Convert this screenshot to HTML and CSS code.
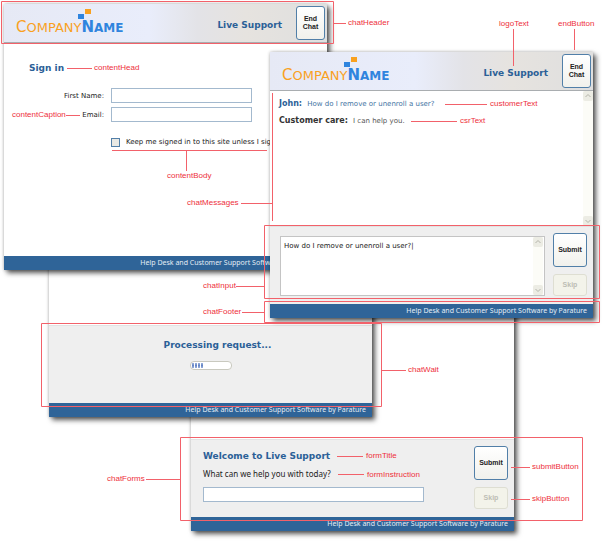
FILE: index.html
```html
<!DOCTYPE html>
<html lang="en">
<head>
<meta charset="utf-8">
<title>Live Support chat style guide</title>
<link rel="stylesheet" href="styles.css">
</head>
<body>
<main class="canvas">

  <section class="window window-forms">
    <div class="window-body"></div>
    <form class="panel forms">
      <div class="forms-main">
        <h2 class="title">Welcome to Live Support</h2>
        <label class="instruction" for="question">What can we help you with today?</label>
        <input class="field" id="question" type="text">
      </div>
      <div class="actions">
        <button class="button submit" type="button">Submit</button>
        <button class="button skip" type="button" disabled>Skip</button>
      </div>
    </form>
    <footer class="footer">Help Desk and Customer Support Software by Parature</footer>
  </section>

  <section class="window window-wait">
    <div class="window-body"></div>
    <div class="panel wait">
      <h2 class="title wait-title">Processing request...</h2>
      <div class="loader"><i></i><i></i><i></i><i></i></div>
    </div>
    <footer class="footer">Help Desk and Customer Support Software by Parature</footer>
  </section>

  <section class="window window-signin">
    <header class="header">
      <div class="logo">
        <svg class="logo-mark" viewBox="0 0 13 11" aria-hidden="true"><rect x="7" y="0" width="6" height="5" fill="#f9a11f"/><rect x="0" y="5" width="6" height="5" fill="#2f84de"/></svg>
        <div class="logo-name"><span class="company">Company</span><span class="name">Name</span></div>
      </div>
      <h1 class="title">Live Support</h1>
      <button class="button end" type="button">End Chat</button>
    </header>
    <form class="window-body signin">
      <h2 class="title">Sign in</h2>
      <div class="signin-fields">
        <label for="first">First Name:</label>
        <input class="field" id="first" type="text">
        <label for="email">Email:</label>
        <input class="field" id="email" type="text">
      </div>
      <label class="keep"><input type="checkbox">Keep me signed in to this site unless I sign out</label>
    </form>
    <footer class="footer">Help Desk and Customer Support Software by Parature</footer>
  </section>

  <section class="window window-chat">
    <header class="header">
      <div class="logo">
        <svg class="logo-mark" viewBox="0 0 13 11" aria-hidden="true"><rect x="7" y="0" width="6" height="5" fill="#f9a11f"/><rect x="0" y="5" width="6" height="5" fill="#2f84de"/></svg>
        <div class="logo-name"><span class="company">Company</span><span class="name">Name</span></div>
      </div>
      <h1 class="title">Live Support</h1>
      <button class="button end" type="button">End Chat</button>
    </header>
    <div class="window-body messages">
      <div class="message-list">
        <p class="customer"><b>John:</b> How do I remove or unenroll a user?</p>
        <p class="csr"><b>Customer care:</b> I can help you.</p>
      </div>
      <div class="scrollbar">
        <svg viewBox="0 0 10 10" aria-hidden="true"><path d="M2.5 6 5 3.5 7.5 6"/></svg>
        <svg viewBox="0 0 10 10" aria-hidden="true"><path d="M2.5 4 5 6.5 7.5 4"/></svg>
      </div>
    </div>
    <form class="panel entry">
      <div class="entry-box">
        <textarea aria-label="Message">How do I remove or unenroll a user?|</textarea>
        <div class="scrollbar">
          <svg viewBox="0 0 10 10" aria-hidden="true"><path d="M2.5 6 5 3.5 7.5 6"/></svg>
          <svg viewBox="0 0 10 10" aria-hidden="true"><path d="M2.5 4 5 6.5 7.5 4"/></svg>
        </div>
      </div>
      <div class="actions">
        <button class="button submit" type="button">Submit</button>
        <button class="button skip" type="button" disabled>Skip</button>
      </div>
    </form>
    <footer class="footer">Help Desk and Customer Support Software by Parature</footer>
  </section>

  <svg class="callouts" viewBox="0 0 602 543" aria-hidden="true">
    <path d="M1.500 1.500H333.500V43.500H1.500ZM333.500 23.500H346"/>
    <path d="M67 68.500H92M66 115.500H80"/>
    <path d="M112 150.500H267M186.500 150.500V171"/>
    <path d="M272.500 93V221M241 203.500H272.500"/>
    <path d="M513.500 29V66M574.500 29V50"/>
    <path d="M445 104.500H487M411 121.500H457"/>
    <path d="M264.500 225.500H599.500V298.500H264.500ZM236 286.500H264.500"/>
    <path d="M264.500 301.500H599.500V322.500H264.500ZM242 312.500H264.500"/>
    <path d="M41.500 323.500H381.500V406.500H41.500ZM381.500 370.500H406"/>
    <path d="M180.500 437.500H582.500V520.500H180.500ZM146 479.500H180.500"/>
    <path d="M337 456.500H363M338 474.500H364"/>
    <path d="M511 467.500H530M511 499.500H530"/>
  </svg>

  <span class="tag tag-header">chatHeader</span>
  <span class="tag tag-logo">logoText</span>
  <span class="tag tag-end">endButton</span>
  <span class="tag tag-head">contentHead</span>
  <span class="tag tag-caption">contentCaption</span>
  <span class="tag tag-body">contentBody</span>
  <span class="tag tag-messages">chatMessages</span>
  <span class="tag tag-customer">customerText</span>
  <span class="tag tag-csr">csrText</span>
  <span class="tag tag-input">chatInput</span>
  <span class="tag tag-footer">chatFooter</span>
  <span class="tag tag-wait">chatWait</span>
  <span class="tag tag-forms">chatForms</span>
  <span class="tag tag-title">formTitle</span>
  <span class="tag tag-instruction">formInstruction</span>
  <span class="tag tag-submit">submitButton</span>
  <span class="tag tag-skip">skipButton</span>
</main>
</body>
</html>
```
FILE: styles.css
```css
* { box-sizing: border-box; }

body {
  margin: 0;
  background: #fff;
  color: #222;
  font: 7px/10px "DejaVu Sans", Verdana, sans-serif;
}

h1, h2, p { margin: 0; }

input, button, textarea { font: inherit; color: inherit; margin: 0; }

/* Free canvas holding the overlapping windows and their callouts */
.canvas {
  position: relative;
  min-height: 543px;
  overflow: hidden;
}

.window {
  position: absolute;
  display: flex;
  flex-direction: column;
  width: 323px;
  height: 266px;
  background: #fff;
  box-shadow: 3px 3px 5px rgba(0, 0, 0, .65), 0 0 3px rgba(0, 0, 0, .25);
}

.window-signin { left: 4px; top: 4px; }
.window-chat { left: 270px; top: 52px; }
.window-wait { left: 49px; top: 151px; }
.window-forms { left: 191px; top: 265px; }

.window-body { flex: 1; }

.title {
  color: #2b6097;
  font-size: 9px;
  line-height: 12px;
  font-weight: bold;
}

.header {
  display: flex;
  align-items: flex-start;
  gap: 14px;
  height: 39px;
  padding: 2px 2px 0 12px;
  border-bottom: 1px solid #a9adb0;
  background: linear-gradient(90deg, #e6e9f5, #e9edfb 45%, #e3e3e7 60%, #e6e3df 75%, #dfdfdf);
}

.header .title { margin-top: 13px; }

.logo { flex: 1; padding-top: 3px; }

.logo-mark {
  display: block;
  width: 13px;
  height: 11px;
  margin-left: 62px;
}

.logo-name {
  display: flex;
  align-items: baseline;
  height: 14px;
  line-height: 14px;
  text-transform: uppercase;
}

.company { color: #f9a11f; font-size: 13px; }
.company::first-letter { font-size: 15px; }
.name { color: #2f84de; font-size: 12px; font-weight: bold; }
.name::first-letter { font-size: 15px; }

.button {
  border: 1px solid #517fa8;
  border-radius: 3px;
  padding: 0;
  background: linear-gradient(#fff, #f1f1ec);
  font-family: "Liberation Sans", Arial, sans-serif;
  font-size: 7px;
  line-height: 8px;
  font-weight: bold;
  text-align: center;
}

.end {
  width: 29px;
  height: 34px;
  padding: 0 3px;
}

.field {
  width: 100%;
  height: 15px;
  border: 1px solid #a3b9ce;
  padding: 0 3px;
  background: #fff;
}

.signin { padding: 19px 0 0 25px; }

.signin-fields {
  display: grid;
  grid-template-columns: 75px 141px;
  gap: 4px 7px;
  margin-top: 14px;
  align-items: center;
}

.signin-fields label { text-align: right; }

.keep {
  display: flex;
  align-items: center;
  gap: 6px;
  margin: 15px 0 0 82px;
  white-space: nowrap;
}

.keep input {
  appearance: none;
  width: 9px;
  height: 9px;
  border: 1px solid #527fa8;
  background: #e9e9e4;
}

.messages { display: flex; }

.message-list {
  flex: 1;
  padding: 8px 9px;
}

.message-list p { margin-bottom: 7px; }
.message-list b { font-size: 8px; margin-right: 3px; }
.customer { color: #4474a3; }
.customer b { color: #2b6097; }
.csr { color: #555; }
.csr b { color: #333; }

.scrollbar {
  display: flex;
  flex-direction: column;
  justify-content: space-between;
  width: 10px;
  background: #fcfcf7;
}

.scrollbar svg {
  width: 10px;
  height: 10px;
  border-radius: 2px;
  background: #ecece4;
  fill: none;
  stroke: #b4b4aa;
}

.panel {
  height: 78px;
  border-top: 1px solid #e2e2e2;
  background: #efefef;
}

.actions {
  display: flex;
  flex-direction: column;
  gap: 7px;
}

.submit { width: 34px; height: 34px; }

.skip {
  width: 34px;
  height: 22px;
  border-color: #deded2;
  background: #f3f3ea;
  color: #bdbdb4;
}

.entry {
  display: flex;
  gap: 8px;
  padding: 6px 6px 8px 10px;
}

.entry-box {
  display: flex;
  flex: 1;
  margin-top: 3px;
  height: 60px;
  border: 1px solid #c4c4c4;
  padding-right: 1px;
  background: #fff;
}

.entry-box textarea {
  flex: 1;
  min-width: 0;
  border: 0;
  padding: 4px 3px;
  resize: none;
  overflow: hidden;
  background: none;
}

.wait {
  display: flex;
  flex-direction: column;
  align-items: center;
  gap: 10px;
  padding-top: 13px;
}

.wait-title { padding-left: 14px; }

.loader {
  display: flex;
  gap: 1px;
  width: 42px;
  height: 9px;
  border: 1px solid #c9c9bf;
  border-radius: 4px;
  padding: 1px;
  background: #fff;
}

.loader i {
  width: 2px;
  background: linear-gradient(#9db3dc, #6585c6, #9db3dc);
}

.forms {
  display: flex;
  justify-content: space-between;
  padding: 6px 6px 0 12px;
}

.forms-main {
  display: flex;
  flex-direction: column;
  width: 221px;
  padding-top: 4px;
}

.instruction {
  margin: 7px 0 8px;
  font-family: "Noto Sans", Verdana, sans-serif;
  font-size: 8px;
}

.footer {
  height: 14px;
  padding-right: 6px;
  background: #2f6498;
  color: #e4edf5;
  font-family: "Noto Sans", Verdana, sans-serif;
  line-height: 14px;
  text-align: right;
}

.callouts {
  position: absolute;
  left: 0;
  top: 0;
  width: 602px;
  height: 543px;
  fill: none;
  stroke: #f2616a;
  pointer-events: none;
}

.tag {
  position: absolute;
  color: #ee2f3b;
  font: 8px/10px "Liberation Sans", Arial, sans-serif;
}

.tag-header { left: 348px; top: 18px; }
.tag-logo { left: 499px; top: 19px; }
.tag-end { left: 558px; top: 19px; }
.tag-head { left: 94px; top: 63px; }
.tag-caption { left: 12px; top: 110px; }
.tag-body { left: 167px; top: 171px; }
.tag-messages { left: 187px; top: 198px; }
.tag-customer { left: 490px; top: 99px; }
.tag-csr { left: 460px; top: 116px; }
.tag-input { left: 203px; top: 281px; }
.tag-footer { left: 203px; top: 307px; }
.tag-wait { left: 408px; top: 365px; }
.tag-forms { left: 107px; top: 474px; }
.tag-title { left: 366px; top: 451px; }
.tag-instruction { left: 367px; top: 470px; }
.tag-submit { left: 532px; top: 462px; }
.tag-skip { left: 532px; top: 494px; }
```
